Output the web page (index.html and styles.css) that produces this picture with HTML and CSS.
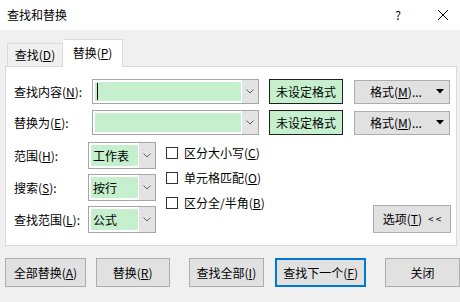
FILE: index.html
```html
<!DOCTYPE html>
<html lang="zh-CN">
<head>
    <meta charset="UTF-8">
    <title>查找和替换</title>
    <link rel="stylesheet" href="styles.css">
</head>
<body>
    <div class="titlebar">
        <span class="title">查找和替换</span>
        <span class="help">?</span>
        <svg class="close" width="12" height="12" viewBox="0 0 12 12">
            <path d="M1 1 L11 11 M11 1 L1 11" stroke="#000" stroke-width="1" fill="none"/>
        </svg>
    </div>

    <div class="tabs">
        <div class="tab">查找(<u>D</u>)</div>
        <div class="tab active">替换(<u>P</u>)</div>
    </div>

    <div class="panel">
        <!-- find / replace rows -->
        <div class="row">
            <label class="label">查找内容(<u>N</u>):</label>
            <div class="combo wide">
                <div class="field"><span class="caret"></span></div>
                <div class="arrow"><svg width="8" height="5" viewBox="0 0 8 5"><path d="M0.5 0.5 L4 4 L7.5 0.5" stroke="#606060" fill="none"/></svg></div>
            </div>
            <div class="fmt-box">未设定格式</div>
            <div class="btn fmt-btn">格式(<u>M</u>)...<svg class="tri" width="8" height="5" viewBox="0 0 8 5"><path d="M0 0 H8 L4 4.5 Z" fill="#000"/></svg></div>
        </div>
        <div class="row">
            <label class="label">替换为(<u>E</u>):</label>
            <div class="combo wide">
                <div class="field"></div>
                <div class="arrow"><svg width="8" height="5" viewBox="0 0 8 5"><path d="M0.5 0.5 L4 4 L7.5 0.5" stroke="#606060" fill="none"/></svg></div>
            </div>
            <div class="fmt-box">未设定格式</div>
            <div class="btn fmt-btn">格式(<u>M</u>)...<svg class="tri" width="8" height="5" viewBox="0 0 8 5"><path d="M0 0 H8 L4 4.5 Z" fill="#000"/></svg></div>
        </div>

        <!-- options -->
        <div class="options">
            <div class="selects">
                <div class="sel-row">
                    <label class="label short">范围(<u>H</u>):</label>
                    <div class="combo small">
                        <div class="field">工作表</div>
                        <div class="arrow"><svg width="8" height="5" viewBox="0 0 8 5"><path d="M0.5 0.5 L4 4 L7.5 0.5" stroke="#606060" fill="none"/></svg></div>
                    </div>
                </div>
                <div class="sel-row">
                    <label class="label short">搜索(<u>S</u>):</label>
                    <div class="combo small">
                        <div class="field">按行</div>
                        <div class="arrow"><svg width="8" height="5" viewBox="0 0 8 5"><path d="M0.5 0.5 L4 4 L7.5 0.5" stroke="#606060" fill="none"/></svg></div>
                    </div>
                </div>
                <div class="sel-row">
                    <label class="label short">查找范围(<u>L</u>):</label>
                    <div class="combo small">
                        <div class="field">公式</div>
                        <div class="arrow"><svg width="8" height="5" viewBox="0 0 8 5"><path d="M0.5 0.5 L4 4 L7.5 0.5" stroke="#606060" fill="none"/></svg></div>
                    </div>
                </div>
            </div>
            <div class="checks">
                <div class="check"><span class="box"></span>区分大小写(<u>C</u>)</div>
                <div class="check"><span class="box"></span>单元格匹配(<u>O</u>)</div>
                <div class="check"><span class="box"></span>区分全/半角(<u>B</u>)</div>
            </div>
            <div class="btn opt-btn">选项(<u>T</u>)<span class="chev">&lt; &lt;</span></div>
        </div>
    </div>

    <div class="actions">
        <div class="btn act b1">全部替换(<u>A</u>)</div>
        <div class="btn act b2">替换(<u>R</u>)</div>
        <div class="btn act b3">查找全部(<u>I</u>)</div>
        <div class="btn act b4 focused">查找下一个(<u>F</u>)</div>
        <div class="btn act b5">关闭</div>
    </div>
</body>
</html>
```

FILE: styles.css
```css
body {
    margin: 0;
    width: 460px;
    height: 302px;
    overflow: hidden;
    background: #f0f0f0;
    font-family: "Noto Sans CJK SC", "Noto Sans", sans-serif;
    font-size: 12px;
    line-height: 16px;
    color: #000;
}
u {
    text-decoration: underline;
    text-underline-offset: 1px;
}
.titlebar {
    height: 30px;
    background: #fff;
    display: flex;
    align-items: center;
    padding-left: 7px;
}
.title {
    flex: 1;
}
.help {
    margin-right: 36px;
}
.close {
    margin-right: 11px;
}
.tabs {
    height: 36px;
    display: flex;
    align-items: flex-end;
    padding-left: 7px;
}
.tab {
    height: 22px;
    width: 54px;
    border: 1px solid #d9d9d9;
    border-bottom: none;
    text-align: center;
    line-height: 22px;
}
.tab.active {
    height: 27px;
    width: 59px;
    border-left: none;
    background: #fff;
    position: relative;
    margin-bottom: -1px;
    line-height: 26px;
}
.panel {
    margin: 0 3px 0 5px;
    background: #fff;
    border: 1px solid #d9d9d9;
    padding: 12px 5px 12px 8px;
}
.row {
    display: flex;
    align-items: center;
    height: 25px;
    margin-bottom: 6px;
}
.label {
    width: 78px;
    flex-shrink: 0;
}
.label.short {
    width: 74px;
}
.combo {
    display: flex;
    border: 1px solid #a6a6a6;
    background: #fff;
    box-sizing: border-box;
}
.combo .field {
    flex: 1;
    margin: 2px 1px 2px 2px;
    background: #c6efce;
    display: flex;
    align-items: center;
    padding-left: 2px;
}
.combo .arrow {
    width: 16px;
    background: #e3e3e3;
    display: flex;
    align-items: center;
    justify-content: center;
}
.combo.wide {
    width: 167px;
    height: 25px;
}
.combo.small {
    width: 68px;
    height: 27px;
}
.caret {
    width: 1px;
    height: 17px;
    background: #000;
}
.fmt-box {
    width: 72px;
    height: 23px;
    margin-left: 10px;
    background: #c6efce;
    border: 1px solid #1e1e1e;
    text-align: center;
    line-height: 23px;
}
.btn {
    background: #e1e1e1;
    border: 1px solid #adadad;
    box-sizing: border-box;
    display: flex;
    align-items: center;
    justify-content: center;
}
.fmt-btn {
    width: 96px;
    height: 24px;
    margin-left: 11px;
    padding-left: 10px;
}
.fmt-btn .tri {
    margin-left: 14px;
}
.options {
    display: flex;
    margin-top: 7px;
}
.sel-row {
    display: flex;
    align-items: center;
    margin-bottom: 5px;
}
.sel-row:last-child {
    margin-bottom: 0;
}
.checks {
    margin-left: 10px;
    margin-top: -2px;
}
.check {
    height: 25px;
    display: flex;
    align-items: center;
}
.box {
    width: 10px;
    height: 10px;
    border: 1px solid #333;
    background: #fff;
    margin-right: 6px;
}
.opt-btn {
    width: 78px;
    height: 28px;
    margin-left: auto;
    align-self: flex-end;
}
.chev {
    margin-left: 6px;
    font-size: 10px;
}
.actions {
    display: flex;
    margin-top: 12px;
    padding-left: 5px;
}
.act {
    height: 29px;
}
.b1 {
    width: 81px;
}
.b2 {
    width: 74px;
    margin-left: 10px;
}
.b3 {
    width: 76px;
    margin-left: 19px;
}
.b4 {
    width: 91px;
    margin-left: 11px;
    justify-content: flex-start;
    padding-left: 6px;
}
.b5 {
    width: 75px;
    margin-left: 19px;
    flex-shrink: 0;
}
.focused {
    border: 2px solid #0078d7;
}
```
